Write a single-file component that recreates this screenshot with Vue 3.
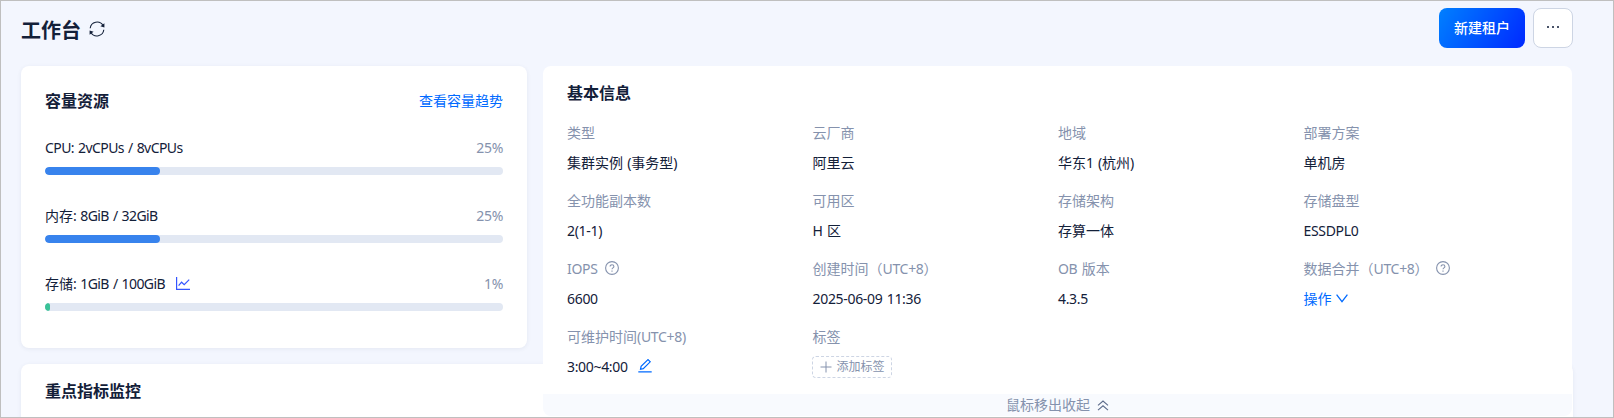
<template>
  <div class="page">
    <header class="header">
      <h1 class="page-title">工作台</h1>
      <svg class="reload" viewBox="0 0 16 16">
        <path d="M1.2 7.2A6.9 6.9 0 0 1 14 4.5M14.8 8.8A6.9 6.9 0 0 1 2 11.5" />
        <path class="solid" d="M15.4 2.2v4.2l-4-1.2zM.6 13.8V9.6l4 1.2z" />
      </svg>
      <div class="actions">
        <button class="btn btn-primary">新建租户</button>
        <button class="btn btn-more"><i></i><i></i><i></i></button>
      </div>
    </header>

    <div class="content">
      <section class="card capacity">
        <div class="card-head">
          <h2>容量资源</h2>
          <a class="link">查看容量趋势</a>
        </div>
        <div v-for="r in resources" :key="r.name" class="resource">
          <div class="resource-row">
            <span>{{ r.name }}<span class="latin usage">{{ r.usage }}</span></span>
            <svg v-if="r.chart" class="chart-icon" viewBox="0 0 14 14">
              <path d="M.6 0v12.4H14M2.6 8.7l3-3.5 2.6 2.4 5-5" />
            </svg>
            <span class="percent latin">{{ r.percent }}%</span>
          </div>
          <div class="track">
            <div class="fill" :class="{ low: r.percent < 10 }" :style="{ width: r.percent + '%' }"></div>
          </div>
        </div>
      </section>

      <!-- 基本信息展开浮层 -->
      <section class="basic">
        <h2>基本信息</h2>
        <div class="info-grid">
          <div v-for="item in info" :key="item.label" class="info-item">
            <div class="label">
              <span>{{ item.label }}<span class="latin">{{ item.zone }}</span>{{ item.end }}</span>
              <svg v-if="item.help" class="help" viewBox="0 0 14 14">
                <circle cx="7" cy="7" r="6.4" />
                <path d="M5.1 5.5C5.1 4.5 5.9 3.8 7 3.8s1.9.7 1.9 1.7C8.9 6.9 7 6.9 7 8.3M7 9.6v1.1" />
              </svg>
            </div>
            <div v-if="item.type === 'tag'" class="tag">
              <svg viewBox="0 0 12 12"><path d="M6 .5v11M.5 6h11" /></svg>
              <span>添加标签</span>
            </div>
            <div v-else class="value" :class="{ link: item.type === 'action' }">
              <span>{{ item.value }}<span class="latin">{{ item.text }}</span>{{ item.tail }}</span>
              <svg v-if="item.type === 'action'" class="down" viewBox="0 0 12 9">
                <path d="M.6.7 6 7.6 11.4.7" />
              </svg>
              <svg v-if="item.type === 'edit'" class="edit" viewBox="0 0 14 14">
                <path d="M.3 12.8h13.4M2.5 10.3l.6-2.9L10 .6l2.2 2.2-6.9 6.9z" />
              </svg>
            </div>
          </div>
        </div>
        <div class="collapse">
          <span>鼠标移出收起</span>
          <svg viewBox="0 0 12 11"><path d="M1 5.4l5-4.4 5 4.4M1 10.2l5-4.4 5 4.4" /></svg>
        </div>
      </section>
    </div>

    <section class="card monitor">
      <h2>重点指标监控</h2>
    </section>
  </div>
</template>

<script setup>
const resources = [
  { name: '', usage: 'CPU: 2vCPUs / 8vCPUs', percent: 25 },
  { name: '内存', usage: ': 8GiB / 32GiB', percent: 25 },
  { name: '存储', usage: ': 1GiB / 100GiB', percent: 1, chart: true },
]

const info = [
  { label: '类型', value: '集群实例', text: ' (', tail: '事务型)' },
  { label: '云厂商', value: '阿里云' },
  { label: '地域', value: '华东', text: '1 (', tail: '杭州)' },
  { label: '部署方案', value: '单机房' },
  { label: '全功能副本数', text: '2(1-1)' },
  { label: '可用区', text: 'H ', tail: '区' },
  { label: '存储架构', value: '存算一体' },
  { label: '存储盘型', text: 'ESSDPL0' },
  { label: '', zone: 'IOPS', text: '6600', help: true },
  { label: '创建时间（', zone: 'UTC+8', end: '）', text: '2025-06-09 11:36' },
  { label: '', zone: 'OB ', end: '版本', text: '4.3.5' },
  { label: '数据合并（', zone: 'UTC+8', end: '）', value: '操作', type: 'action', help: true },
  { label: '可维护时间', zone: '(UTC+8)', text: '3:00~4:00', type: 'edit' },
  { label: '标签', type: 'tag' },
]
</script>

<style>
body { background: #f3f6fe; }
</style>

<style scoped>
.page { box-sizing: border-box; height: 418px; overflow: hidden; padding: 7px 40px 0 20px; border: 1px solid #bfbfbf; background: #f3f6fe; color: #132039; font: 14px/22px 'Noto Sans', 'Noto Sans CJK SC', sans-serif; }
h1, h2 { margin: 0; }
h2 { font-size: 16px; line-height: 24px; font-weight: 600; font-family: 'Noto Sans CJK SC', sans-serif; }
svg { display: block; flex: none; fill: none; stroke: currentColor; }
.latin { letter-spacing: -0.32px; word-spacing: 1px; white-space: pre; }
.usage { letter-spacing: -0.58px; }
.link { color: #006aff; }

/* 顶部 */
.header { display: flex; align-items: center; height: 40px; }
.page-title { font: bold 20px/28px 'Noto Sans CJK SC', sans-serif; margin-top: 3px; }
.reload { width: 16px; height: 16px; margin: 2px 0 0 8px; stroke-width: 1.1; }
.reload .solid { fill: currentColor; stroke: none; }
.actions { display: flex; gap: 8px; margin-left: auto; }
.btn { box-sizing: border-box; height: 40px; padding: 0 0 2px; border-radius: 8px; font: 500 14px/22px 'Noto Sans CJK SC', sans-serif; }
.btn-primary { width: 86px; border: 0; color: #fff; background: linear-gradient(120deg, #0080ff, #0029ff); }
.btn-more { display: flex; align-items: center; justify-content: center; gap: 3px; width: 40px; border: 1px solid #cdd5e4; background: #fff; }
.btn-more i { width: 2px; height: 2px; background: #4a5469; }

/* 容量资源 */
.content { position: relative; margin-top: 18px; }
.card { box-sizing: border-box; background: #fff; border-radius: 8px; box-shadow: 0 1px 4px rgba(54, 69, 99, 0.08); }
.capacity { width: 506px; height: 282px; padding: 22px 24px 0 24px; }
.card-head { display: flex; align-items: center; justify-content: space-between; margin-bottom: 25px; }
.card-head .link { margin: 1px 0 -1px; }
.resource { margin-bottom: 30px; }
.resource-row { display: flex; align-items: center; height: 22px; margin-bottom: 8px; }
.percent { margin-left: auto; color: #8592ad; }
.chart-icon { width: 14px; height: 14px; margin-left: 11px; color: #3354ff; stroke-width: 1.2; }
.track { height: 8px; border-radius: 4px; background: #e2e8f3; overflow: hidden; }
.fill { height: 8px; border-radius: 4px; background: #3883ed; }
.fill.low { background: #3ac298; }

/* 基本信息 */
.basic { position: absolute; top: 0; left: 522px; box-sizing: border-box; width: 1029px; height: 350px; padding: 14px 0 0 24px; border-radius: 8px; background: #fff; overflow: hidden; }
.info-grid { display: grid; grid-template-columns: repeat(4, 245.5px); row-gap: 16px; margin: 18px 0 16px; }
.label, .value { display: flex; align-items: center; height: 22px; white-space: nowrap; }
.label { margin-bottom: 8px; color: #8592ad; }
.help { width: 14px; height: 14px; margin: -2px 0 0 7px; stroke-width: 1.1; }
.down { width: 12px; height: 9px; margin: -2px 0 0 4px; stroke-width: 1.3; }
.edit { width: 14px; height: 14px; margin: -2px 0 0 10px; color: #006aff; stroke-width: 1.2; }
.tag { box-sizing: border-box; display: flex; align-items: center; gap: 5px; width: 80px; height: 22px; margin-left: -1px; padding-left: 7px; border: 1px dashed #cdd5e4; border-radius: 4px; color: #8592ad; font-size: 12px; }
.tag svg { width: 12px; height: 12px; stroke-width: 1; }
.collapse { display: flex; align-items: center; justify-content: center; gap: 7px; height: 22px; margin-left: -24px; background: #f8fafe; color: #8592ad; }
.collapse svg { width: 12px; height: 11px; color: #5c6b8a; stroke-width: 1.1; }

/* 指标监控 */
.monitor { height: 120px; margin-top: 16px; padding: 14px 24px; }
</style>
